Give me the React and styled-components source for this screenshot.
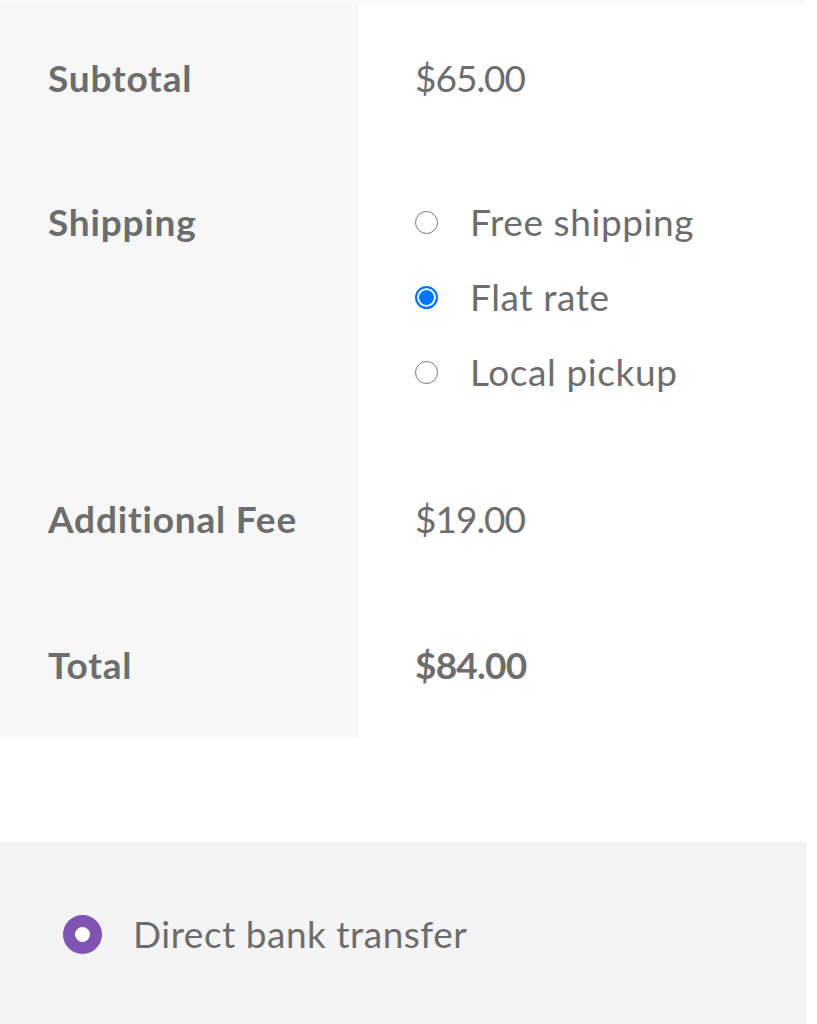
import styled, { createGlobalStyle } from "styled-components"

const GlobalStyle = createGlobalStyle`
  html, body {
    margin: 0;
    padding: 0;
    background: #ffffff;
  }
  body {
    font-family: Lato, "Open Sans", sans-serif;
    color: #6d6d6d;
  }
`

const Page = styled.div`
  width: 806px;
`

const TopStrip = styled.div`
  height: 4px;
  background: #fafafa;
`

const Totals = styled.div`
  display: flex;
  flex-direction: column;
`

const Row = styled.div`
  display: grid;
  grid-template-columns: 358px 1fr;
`

const Label = styled.div`
  background: #f7f7f7;
  padding: ${(p) => (p.$list ? "47px 0 48px 48px" : "49px 0 47px 48px")};
  font-size: 37px;
  line-height: 50px;
  font-weight: 700;
  letter-spacing: 0.8px;
`

const Value = styled.div`
  padding: ${(p) => (p.$list ? "47px 0 48px 57px" : "49px 0 47px 57px")};
  font-size: 37px;
  line-height: 50px;
  font-weight: 400;
  letter-spacing: 0.6px;
`

const Price = styled.span`
  font-weight: ${(p) => (p.$bold ? 700 : 400)};
  letter-spacing: ${(p) => (p.$bold ? "-0.8px" : "-1px")};
`

const Options = styled.ul`
  list-style: none;
  margin: 0;
  padding: 0;
  display: flex;
  flex-direction: column;
  gap: 25px;
`

const Option = styled.li`
  display: flex;
  align-items: center;
  height: 50px;
  gap: 32px;
`

const Radio = styled.span`
  box-sizing: border-box;
  width: 23px;
  height: 23px;
  border-radius: 50%;
  flex-shrink: 0;
  border: ${(p) => (p.$checked ? "2px solid #0075ff" : "1.5px solid #767676")};
  background: ${(p) => (p.$checked ? "#0075ff" : "#fff")};
  box-shadow: ${(p) => (p.$checked ? "inset 0 0 0 2px #fff" : "none")};
`

const Spacer = styled.div`
  height: 105px;
`

const Payment = styled.div`
  background: #f4f4f4;
  height: 182px;
  padding: 72px 0 0 63px;
  box-sizing: border-box;
`

const Method = styled.div`
  display: flex;
  align-items: center;
  gap: 31px;
  font-size: 37px;
  line-height: 40px;
  letter-spacing: 0.5px;
`

const PurpleRadio = styled.span`
  box-sizing: border-box;
  width: 39px;
  height: 39px;
  border-radius: 50%;
  border: 12px solid #7f54b3;
  background: #fff;
  flex-shrink: 0;
`

const shipping = [
  { label: "Free shipping", checked: false },
  { label: "Flat rate", checked: true },
  { label: "Local pickup", checked: false },
]

const App = () => {
  return (
    <Page>
      <GlobalStyle />
      <TopStrip />
      <Totals>
        <Row>
          <Label>Subtotal</Label>
          <Value>
            <Price>$65.00</Price>
          </Value>
        </Row>
        <Row>
          <Label $list>Shipping</Label>
          <Value $list>
            <Options>
              {shipping.map((s) => (
                <Option key={s.label}>
                  <Radio $checked={s.checked} />
                  {s.label}
                </Option>
              ))}
            </Options>
          </Value>
        </Row>
        <Row>
          <Label>Additional Fee</Label>
          <Value>
            <Price>$19.00</Price>
          </Value>
        </Row>
        <Row>
          <Label>Total</Label>
          <Value>
            <Price $bold>$84.00</Price>
          </Value>
        </Row>
      </Totals>
      <Spacer />
      <Payment>
        <Method>
          <PurpleRadio />
          Direct bank transfer
        </Method>
      </Payment>
    </Page>
  )
}

export default App
